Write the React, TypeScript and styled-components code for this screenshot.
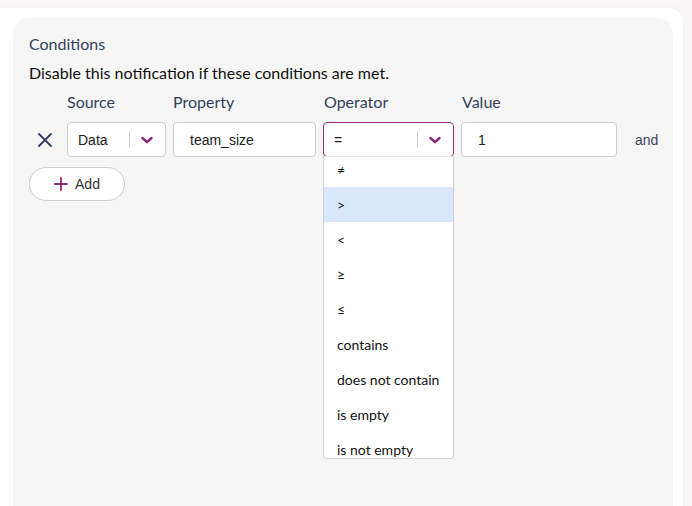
import React, { useLayoutEffect, useRef } from "react"
import styled, { createGlobalStyle } from "styled-components"

const GlobalStyle = createGlobalStyle`
  html, body {
    margin: 0;
    padding: 0;
    background: #faf7f9;
    overflow: hidden;
  }
  body {
    font-family: Lato, "Noto Sans", sans-serif;
  }
`

const Page = styled.div`
  height: 506px;
  overflow: hidden;
  padding-top: 8px;
  box-sizing: border-box;
`

const Card = styled.div`
  margin: 0 9px 0 -10px;
  padding: 10px 10px 0 23px;
  background: #fff;
  border-radius: 0 14px 0 0;
  box-shadow: 0 0 6px rgba(140, 90, 130, 0.08);
  height: 520px;
  box-sizing: border-box;
`

const Panel = styled.section`
  background: #f6f6f6;
  border-radius: 16px 16px 0 0;
  padding: 16px 16px 0;
  height: 520px;
  box-sizing: border-box;
`

const Title = styled.h3`
  margin: 0;
  font-size: 16px;
  line-height: 20px;
  font-weight: 400;
  color: #34405a;
`

const Hint = styled.p`
  margin: 9px 0 0;
  font-size: 16px;
  line-height: 20px;
  color: #111;
`

const Grid = styled.div`
  display: grid;
  grid-template-columns: 31px 99px 143px 131px 156px auto;
  column-gap: 7px;
  align-items: center;
  margin-top: 9px;
`

const Label = styled.div<{ $shift?: number }>`
  font-size: 16px;
  line-height: 20px;
  color: #34405a;
  padding-left: ${p => p.$shift ?? 0}px;
  margin-bottom: 10px;
`

const RemoveButton = styled.button`
  border: 0;
  background: none;
  padding: 0 0 0 8px;
  height: 35px;
  display: flex;
  align-items: center;
  color: #2e3a57;
  cursor: pointer;
`

const Box = styled.div<{ $focused?: boolean }>`
  position: relative;
  height: 35px;
  box-sizing: border-box;
  background: #fff;
  border: 1px solid ${p => (p.$focused ? "#97317f" : "#cdcdcd")};
  border-radius: 4px;
  display: flex;
  align-items: center;
  font-family: "Liberation Sans", Arial, sans-serif;
  font-size: 14px;
  color: #222;
`

const SelectValue = styled.span<{ $pad?: number }>`
  flex: 1;
  padding-left: ${p => p.$pad ?? 10}px;
`

const Indicator = styled.span`
  width: 36px;
  height: 100%;
  display: flex;
  align-items: center;
  justify-content: center;
  position: relative;
  &::before {
    content: "";
    position: absolute;
    left: 0;
    top: 8px;
    bottom: 8px;
    width: 1px;
    background: #d0d0d0;
  }
`

const InputText = styled.span`
  padding-left: 16px;
`

const And = styled.span`
  font-family: "Liberation Sans", Arial, sans-serif;
  font-size: 14px;
  color: #3a4560;
  margin-left: 11px;
`

const AddButton = styled.button`
  margin-top: 10px;
  width: 96px;
  height: 34px;
  border: 1px solid #cdcdcd;
  border-radius: 17px;
  background: #fff;
  display: flex;
  align-items: center;
  justify-content: center;
  gap: 7px;
  font-family: "Liberation Sans", Arial, sans-serif;
  font-size: 14px;
  color: #333;
  padding: 0;
  cursor: pointer;
`

const Menu = styled.ul`
  position: absolute;
  top: 100%;
  left: -1px;
  right: -1px;
  margin: 0;
  padding: 4px 0;
  list-style: none;
  height: 303px;
  box-sizing: border-box;
  overflow-y: auto;
  scrollbar-width: none;
  background: #fff;
  border: 1px solid #cfcfcf;
  border-top-color: #e4e4e4;
  border-radius: 0 0 4px 4px;
  z-index: 2;
  &::-webkit-scrollbar {
    display: none;
  }
`

const Option = styled.li<{ $active?: boolean }>`
  height: 35px;
  display: flex;
  align-items: center;
  padding-left: 13px;
  font-family: Lato, "Noto Sans", sans-serif;
  font-size: 14px;
  color: #111;
  background: ${p => (p.$active ? "#d9e7fc" : "transparent")};
`

const Chevron = () => (
  <svg width="14" height="14" viewBox="0 0 14 14" fill="none">
    <path d="M2.5 5l4.5 4.2L11.5 5" stroke="#8e2a7e" strokeWidth="2.4" strokeLinecap="round" strokeLinejoin="round" />
  </svg>
)

const Cross = () => (
  <svg width="16" height="16" viewBox="0 0 16 16" fill="none">
    <path d="M2 2l12 12M14 2L2 14" stroke="currentColor" strokeWidth="1.8" strokeLinecap="round" />
  </svg>
)

const Plus = () => (
  <svg width="14" height="14" viewBox="0 0 14 14" fill="none">
    <path d="M7 1v12M1 7h12" stroke="#8e2a7e" strokeWidth="1.8" strokeLinecap="round" />
  </svg>
)

const operators = ["≠", ">", "<", "≥", "≤", "contains", "does not contain", "is empty", "is not empty"]

const OperatorMenu = () => {
  const ref = useRef<HTMLUListElement>(null)
  useLayoutEffect(() => {
    if (ref.current) ref.current.scrollTop = 9
  }, [])
  return (
    <Menu ref={ref}>
      {operators.map(op => (
        <Option key={op} $active={op === ">"}>
          {op}
        </Option>
      ))}
    </Menu>
  )
}

export default function App() {
  return (
    <Page>
      <GlobalStyle />
      <Card>
        <Panel>
          <Title>Conditions</Title>
          <Hint>Disable this notification if these conditions are met.</Hint>
          <Grid>
            <span />
            <Label>Source</Label>
            <Label>Property</Label>
            <Label $shift={1}>Operator</Label>
            <Label $shift={1}>Value</Label>
            <span />

            <RemoveButton aria-label="Remove condition">
              <Cross />
            </RemoveButton>
            <Box>
              <SelectValue>Data</SelectValue>
              <Indicator>
                <Chevron />
              </Indicator>
            </Box>
            <Box>
              <InputText>team_size</InputText>
            </Box>
            <Box $focused>
              <SelectValue>=</SelectValue>
              <Indicator>
                <Chevron />
              </Indicator>
              <OperatorMenu />
            </Box>
            <Box>
              <InputText>1</InputText>
            </Box>
            <And>and</And>
          </Grid>
          <AddButton>
            <Plus />
            Add
          </AddButton>
        </Panel>
      </Card>
    </Page>
  )
}
